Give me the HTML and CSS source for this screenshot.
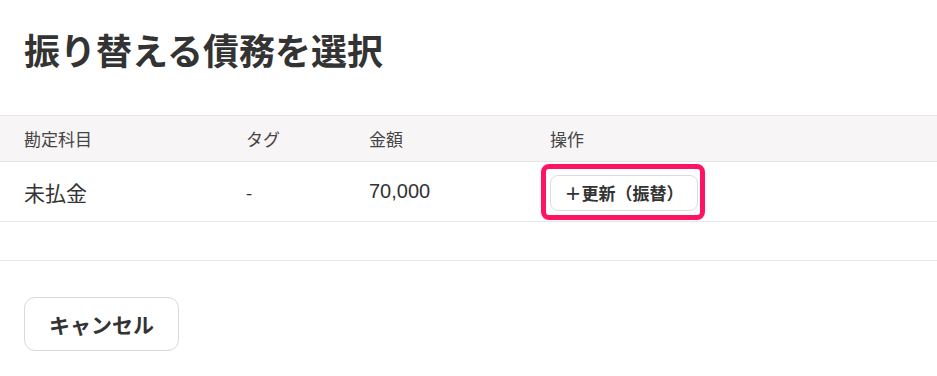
FILE: index.html
```html
<!DOCTYPE html>
<html lang="ja">
<head>
<meta charset="utf-8">
<link rel="stylesheet" href="styles.css">
</head>
<body>
<div class="modal">
  <h1 class="title">振り替える債務を選択</h1>
  <div class="table">
    <div class="row head">
      <div class="cell c1">勘定科目</div>
      <div class="cell c2">タグ</div>
      <div class="cell c3">金額</div>
      <div class="cell c4">操作</div>
    </div>
    <div class="row body-row">
      <div class="cell c1 big">未払金</div>
      <div class="cell c2">-</div>
      <div class="cell c3 num">70,000</div>
      <div class="cell c4 action">
        <span class="highlight"><button class="btn-update">＋更新（振替）</button></span>
      </div>
    </div>
  </div>
  <div class="spacer"></div>
  <div class="footer">
    <button class="btn-cancel">キャンセル</button>
  </div>
</div>
</body>
</html>
```

FILE: styles.css
```css
* { box-sizing: border-box; }
html, body { margin: 0; background: #fff; }
body {
  font-family: "Noto Sans CJK JP", "Noto Sans", sans-serif;
  color: #333;
  width: 937px;
  height: 376px;
  overflow: hidden;
}
.title {
  margin: 0;
  padding: 26px 24px 0;
  height: 115px;
  font-size: 36px;
  line-height: 46px;
  font-weight: 700;
  color: #333;
}
.table { width: 100%; }
.row {
  display: grid;
  grid-template-columns: 222px 123px 181px 1fr;
  padding-left: 24px;
  align-items: center;
}
.head {
  height: 47px;
  background: #f7f5f6;
  border-top: 1px solid #ebe9ea;
  border-bottom: 1px solid #e6e4e5;
  font-size: 17px;
  color: #444;
}
.body-row {
  height: 60px;
  border-bottom: 1px solid #e6e6e6;
  font-size: 18px;
}
.big { font-size: 21px; }
.num { font-family: "Liberation Sans", "Noto Sans", sans-serif; font-size: 20px; }
.action { margin-left: -9px; }
.highlight {
  display: inline-block;
  border: 5px solid #ff1464;
  border-radius: 8px;
  padding: 6px 2px 4px 4px;
  line-height: 0;
}
.btn-update {
  font-family: inherit;
  font-size: 17px;
  font-weight: 700;
  color: #333;
  background: #fff;
  border: 1px solid #dcdcdc;
  border-radius: 8px;
  width: 148px;
  height: 36px;
  padding: 0;
  line-height: 34px;
}
.spacer {
  height: 39px;
  border-bottom: 1px solid #e6e6e6;
}
.footer { padding: 36px 24px 0; }
.btn-cancel {
  font-family: inherit;
  font-size: 21px;
  font-weight: 700;
  color: #333;
  background: #fff;
  border: 1px solid #d9d9d9;
  border-radius: 11px;
  width: 155px;
  height: 54px;
  padding: 0;
}
```
